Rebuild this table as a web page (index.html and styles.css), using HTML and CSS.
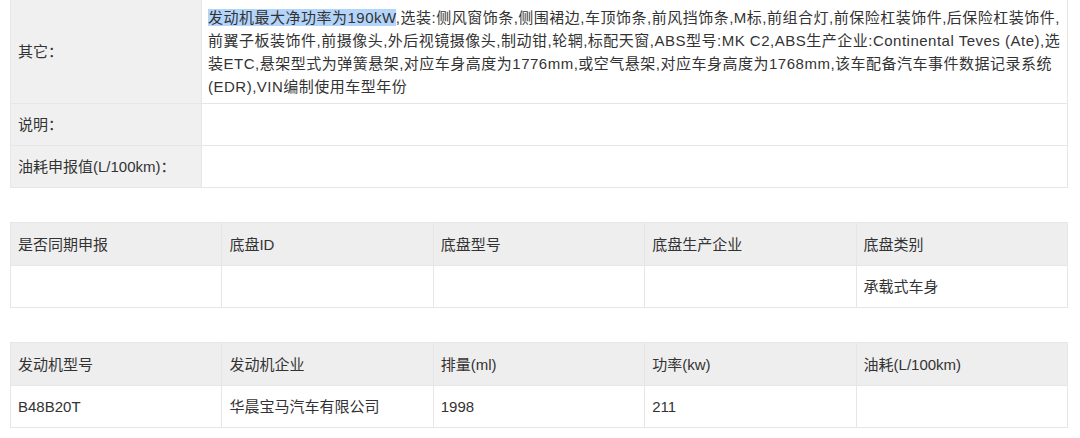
FILE: index.html
```html
<!DOCTYPE html>
<html lang="zh-CN">
<head>
<meta charset="utf-8">
<title>车辆参数</title>
<link rel="stylesheet" href="styles.css">
</head>
<body>
<div class="page">
  <table class="info">
    <colgroup><col class="label-col"><col></colgroup>
    <tr class="tall">
      <th>其它：</th>
      <td><span class="sel">发动机最大净功率为190kW</span>,选装:侧风窗饰条,侧围裙边,车顶饰条,前风挡饰条,M标,前组合灯,前保险杠装饰件,后保险杠装饰件,前翼子板装饰件,前摄像头,外后视镜摄像头,制动钳,轮辋,标配天窗,ABS型号:MK C2,ABS生产企业:Continental Teves (Ate),选装ETC,悬架型式为弹簧悬架,对应车身高度为1776mm,或空气悬架,对应车身高度为1768mm,该车配备汽车事件数据记录系统(EDR),VIN编制使用车型年份</td>
    </tr>
    <tr><th>说明：</th><td></td></tr>
    <tr><th>油耗申报值(L/100km)：</th><td></td></tr>
  </table>

  <table class="grid">
    <tr class="head"><td>是否同期申报</td><td>底盘ID</td><td>底盘型号</td><td>底盘生产企业</td><td>底盘类别</td></tr>
    <tr><td></td><td></td><td></td><td></td><td>承载式车身</td></tr>
  </table>

  <table class="grid">
    <tr class="head"><td>发动机型号</td><td>发动机企业</td><td>排量(ml)</td><td>功率(kw)</td><td>油耗(L/100km)</td></tr>
    <tr><td>B48B20T</td><td>华晨宝马汽车有限公司</td><td>1998</td><td>211</td><td></td></tr>
  </table>
</div>
</body>
</html>
```

FILE: styles.css
```css
html, body {
  margin: 0;
  padding: 0;
  background: #ffffff;
}
body {
  font-family: "Liberation Sans", Arial, "Noto Sans CJK SC", sans-serif;
  font-size: 15px;
  color: #333333;
}
.page {
  padding: 0 12px 0 10px;
}
table {
  width: 100%;
  border-collapse: collapse;
  table-layout: fixed;
}
td, th {
  border: 1px solid #e6e6e6;
  text-align: left;
  font-weight: normal;
  line-height: 23px;
  padding: 9px 6px 9px 7px;
  vertical-align: middle;
}
.info {
  margin-top: -1px;
}
.label-col {
  width: 191px;
}
.info th {
  background: #f0f0f0;
}
.info .tall td {
  padding: 6px 4px 5px 6px;
  letter-spacing: 0.5px;
}
.sel {
  background: #b4d5fb;
}
.grid {
  margin-top: 34px;
}
.grid td {
  height: 23px;
}
.grid .head td {
  background: #eeeeee;
  padding-top: 10px;
}
```
